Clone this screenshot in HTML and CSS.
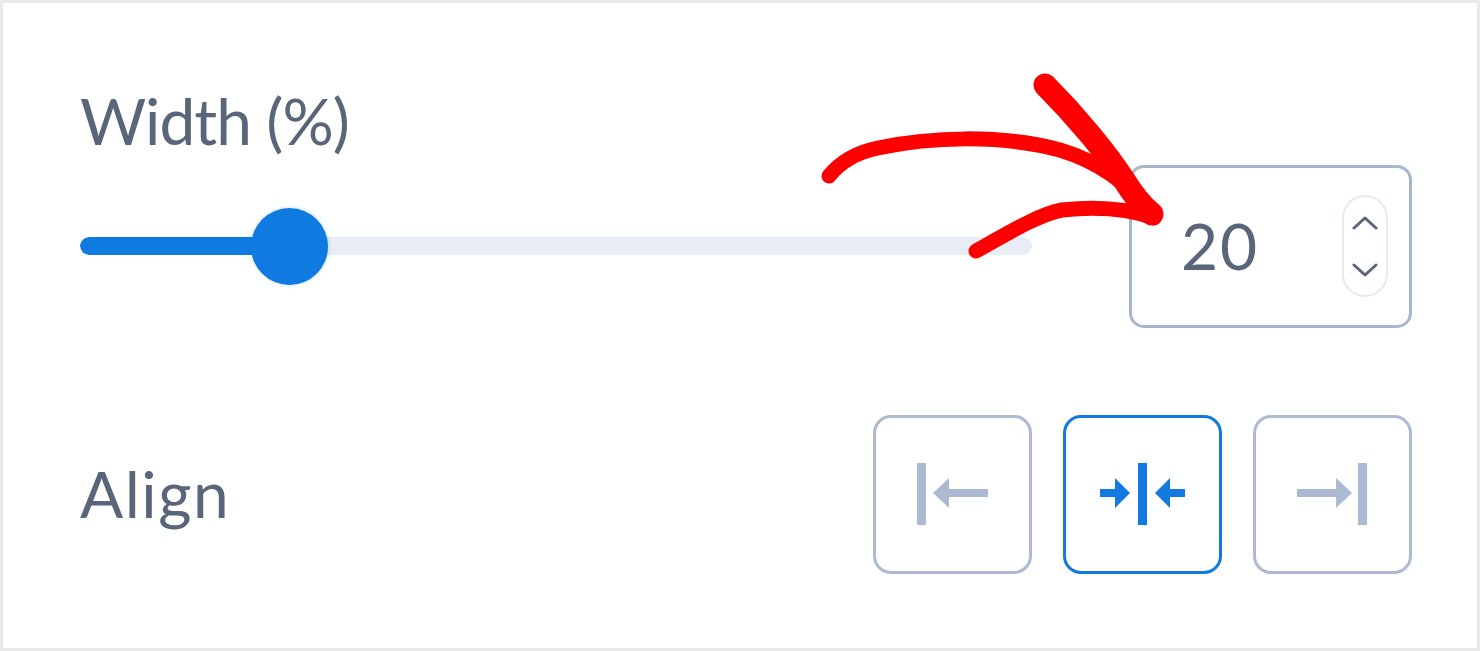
FILE: index.html
```html
<!DOCTYPE html>
<html lang="en">
<head>
<meta charset="utf-8">
<title>Width settings</title>
<link rel="stylesheet" href="styles.css">
</head>
<body>
<div class="panel">
  <div class="label label-width">Width (%)</div>
  <div class="width-row">
    <div class="slider">
      <div class="track">
        <div class="fill" style="width: 209px"></div>
      </div>
      <div class="thumb" style="left: 209px"></div>
    </div>
    <div class="number-box">
      <span class="number-value">20</span>
      <div class="spinner">
        <svg class="chev" width="26" height="14" viewBox="0 0 26 14"><path d="M2 12 L13 2 L24 12" fill="none" stroke="#5b667a" stroke-width="3" stroke-linecap="round" stroke-linejoin="round"/></svg>
        <svg class="chev" width="26" height="14" viewBox="0 0 26 14"><path d="M2 2 L13 12 L24 2" fill="none" stroke="#5b667a" stroke-width="3" stroke-linecap="round" stroke-linejoin="round"/></svg>
      </div>
    </div>
  </div>
  <div class="align-row">
    <div class="label label-align">Align</div>
    <div class="align-buttons">
      <div class="align-btn">
        <svg width="153" height="153" viewBox="3 3 153 153">
          <rect x="44" y="48" width="9" height="62"/>
          <rect x="72" y="74" width="43" height="8"/>
          <polygon points="60,78 76,63 76,93"/>
        </svg>
      </div>
      <div class="align-btn active">
        <svg width="153" height="153" viewBox="3 3 153 153">
          <rect x="37" y="74" width="18" height="8"/>
          <polygon points="67,78 52,63 52,93"/>
          <rect x="75" y="48" width="9" height="62"/>
          <polygon points="92,78 107,63 107,93"/>
          <rect x="104" y="74" width="18" height="8"/>
        </svg>
      </div>
      <div class="align-btn">
        <svg width="153" height="153" viewBox="3 3 153 153">
          <rect x="44" y="74" width="43" height="8"/>
          <polygon points="99,78 83,63 83,93"/>
          <rect x="105" y="48" width="9" height="62"/>
        </svg>
      </div>
    </div>
  </div>
  <svg class="annotation" width="1480" height="651" viewBox="0 0 1480 651">
    <g fill="none" stroke="#ff0000" stroke-linecap="round" stroke-linejoin="round">
      <path d="M829,176 C842,160 858,152 878,148 C930,137 1000,134 1060,150 C1100,162 1130,185 1152,214" stroke-width="15"/>
      <path d="M1045,85 C1078,118 1108,155 1124,180 C1134,196 1142,206 1152,214" stroke-width="23"/>
      <path d="M976,251 C1010,232 1040,214 1062,210 C1100,206 1132,210 1154,218" stroke-width="15"/>
    </g>
  </svg>
</div>
</body>
</html>
```

FILE: styles.css
```css
* {
  box-sizing: border-box;
}

html, body {
  margin: 0;
  padding: 0;
  background: #ffffff;
}

.panel {
  position: relative;
  width: 1480px;
  height: 651px;
  border: 3px solid #e9e9e9;
  background: #ffffff;
  padding: 80px 65px 0 77px;
  font-family: "Lato", "Open Sans", sans-serif;
  color: #596579;
}

.label {
  font-size: 64px;
  line-height: 1.2;
  font-weight: 400;
  color: #596579;
}

.label-width {
  letter-spacing: -1px;
}

.label-align {
  letter-spacing: 1.5px;
}

.width-row {
  display: flex;
  align-items: center;
  justify-content: space-between;
  margin-top: 5px;
}

.slider {
  position: relative;
  width: 952px;
  height: 80px;
  display: flex;
  align-items: center;
}

.track {
  width: 100%;
  height: 18px;
  border-radius: 9px;
  background: #e8ecf4;
  overflow: hidden;
}

.fill {
  height: 100%;
  background: #0f7ae0;
  border-radius: 9px 0 0 9px;
}

.thumb {
  position: absolute;
  top: 2px;
  width: 77px;
  height: 77px;
  margin-left: -38px;
  border-radius: 50%;
  background: #0f7ae0;
  box-shadow: 0 0 4px rgba(15, 122, 224, 0.25);
}

.number-box {
  width: 283px;
  height: 163px;
  border: 3px solid #a7b5ce;
  border-radius: 15px;
  display: flex;
  align-items: center;
  justify-content: space-between;
  padding: 0 21px 0 49px;
}

.number-value {
  font-size: 64px;
  line-height: 1;
  color: #596579;
  letter-spacing: 2px;
}

.spinner {
  width: 46px;
  height: 102px;
  border: 2px solid #e6eaf2;
  border-radius: 23px;
  display: flex;
  flex-direction: column;
  align-items: center;
  justify-content: center;
  gap: 33px;
}

.chev {
  display: block;
}

.align-row {
  display: flex;
  align-items: center;
  justify-content: space-between;
  margin-top: 87px;
}

.align-buttons {
  display: flex;
  gap: 31px;
}

.align-btn {
  width: 159px;
  height: 159px;
  border: 3px solid #adbad2;
  border-radius: 18px;
  fill: #abb9d2;
}

.align-btn svg {
  display: block;
}

.align-btn.active {
  border-color: #1279e0;
  fill: #1279e0;
}

.annotation {
  position: absolute;
  left: -3px;
  top: -3px;
  pointer-events: none;
}
```
